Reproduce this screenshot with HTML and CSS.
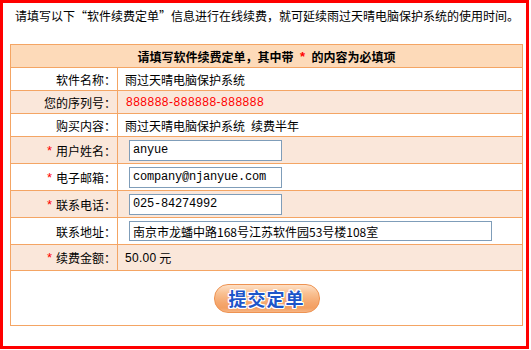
FILE: index.html
```html
<!DOCTYPE html>
<html lang="zh-CN">
<head>
<meta charset="utf-8">
<title>软件续费定单</title>
<link rel="stylesheet" href="styles.css">
</head>
<body>
<div class="frame">
  <p class="intro">请填写以下<span class="ql">“</span>软件续费定单<span class="qr">”</span>信息进行在线续费，就可延续雨过天晴电脑保护系统的使用时间。</p>
  <div class="form">
    <div class="row head">请填写软件续费定单，其中带<span class="hstar">*</span>的内容为必填项</div>
    <div class="row">
      <div class="label">软件名称：</div>
      <div class="value">雨过天晴电脑保护系统</div>
    </div>
    <div class="row alt">
      <div class="label">您的序列号：</div>
      <div class="value"><span class="serial">888888-888888-888888</span></div>
    </div>
    <div class="row">
      <div class="label">购买内容：</div>
      <div class="value">雨过天晴电脑保护系统&ensp;续费半年</div>
    </div>
    <div class="row alt tall">
      <div class="label"><span class="req">*</span>用户姓名：</div>
      <div class="value"><input class="field" type="text" value="anyue"></div>
    </div>
    <div class="row tall">
      <div class="label"><span class="req">*</span>电子邮箱：</div>
      <div class="value"><input class="field" type="text" value="company@njanyue.com"></div>
    </div>
    <div class="row alt tall">
      <div class="label"><span class="req">*</span>联系电话：</div>
      <div class="value"><input class="field" type="text" value="025-84274992"></div>
    </div>
    <div class="row tall">
      <div class="label">联系地址：</div>
      <div class="value"><input class="field wide" type="text" value="南京市龙蟠中路168号江苏软件园53号楼108室"></div>
    </div>
    <div class="row alt amount">
      <div class="label"><span class="req">*</span>续费金额：</div>
      <div class="value"><span class="money">50.00</span>&nbsp;元</div>
    </div>
    <div class="row submit">
      <button class="btn" type="button">提交定单</button>
    </div>
  </div>
</div>
</body>
</html>
```
FILE: styles.css
```css
html, body {
  margin: 0;
  padding: 0;
  background: #ffffff;
}

body {
  font-family: "Noto Sans CJK SC", "Liberation Sans", sans-serif;
  font-size: 12px;
  color: #000000;
}

.frame {
  box-sizing: border-box;
  width: 529px;
  height: 349px;
  border: 3px solid #ff0000;
  padding: 0 7px;
}

.intro {
  margin: 0 0 16px 0;
  padding-left: 5px;
  line-height: 25px;
  white-space: nowrap;
}

.ql,
.qr {
  display: inline-block;
  width: 12px;
}

.ql {
  text-align: right;
}

.qr {
  text-align: left;
}

.form {
  box-sizing: border-box;
  width: 513px;
  border: 1px solid #f4a564;
}

.row {
  display: flex;
  height: 22px;
  border-bottom: 1px solid #f4a564;
  background: #ffffff;
}

.row.alt {
  background: #fae7da;
}

.row.head {
  background: #fddab9;
  justify-content: center;
  align-items: center;
  font-weight: bold;
}

.hstar {
  display: inline-block;
  width: 18px;
  text-align: center;
  color: #ff0000;
  font-family: "Liberation Sans", sans-serif;
  font-size: 13px;
}

.row.tall {
  height: 26px;
}

.row.amount {
  height: 25px;
}

.row.submit {
  height: 54px;
  border-bottom: none;
  justify-content: center;
  align-items: center;
}

.label {
  box-sizing: border-box;
  width: 107px;
  flex: none;
  border-right: 1px solid #f4a564;
  padding-right: 1px;
  display: flex;
  align-items: center;
  justify-content: flex-end;
  white-space: nowrap;
}

.req {
  color: #ff0000;
  font-family: "Liberation Sans", sans-serif;
  font-size: 13px;
  margin-right: 4px;
}

.value {
  flex: 1;
  display: flex;
  align-items: center;
  padding-left: 7px;
  white-space: nowrap;
}

.serial {
  color: #ff0000;
  font-family: "Liberation Sans", sans-serif;
  letter-spacing: 0.5px;
  margin-left: 1px;
}

.money {
  font-family: "Liberation Sans", sans-serif;
  letter-spacing: 0.3px;
}

.field {
  box-sizing: border-box;
  width: 153px;
  height: 21px;
  margin: 0 0 0 4px;
  padding: 0 3px;
  border: 1px solid #7f9db9;
  background: #ffffff;
  font-family: "Liberation Mono", "Noto Sans CJK SC", monospace;
  font-size: 12px;
  letter-spacing: -0.2px;
  color: #000000;
  outline: none;
}

.field.wide {
  width: 363px;
  height: 20px;
  font-family: "Noto Sans CJK SC", "Liberation Sans", sans-serif;
  letter-spacing: 0;
}

.btn {
  box-sizing: border-box;
  width: 106px;
  height: 29px;
  padding: 0;
  border: 1px solid #ee9352;
  border-radius: 14px;
  background: linear-gradient(to bottom, #fde0c6 0%, #f9c193 30%, #f5a86f 65%, #f39f62 85%, #f6b584 100%);
  font-family: "Noto Sans CJK SC", sans-serif;
  font-size: 18px;
  font-weight: bold;
  letter-spacing: 1px;
  color: #1d55c9;
  text-shadow: 1px 0 #fff, -1px 0 #fff, 0 1px #fff, 0 -1px #fff,
    1px 1px #fff, -1px -1px #fff, 1px -1px #fff, -1px 1px #fff;
  cursor: pointer;
}
```
